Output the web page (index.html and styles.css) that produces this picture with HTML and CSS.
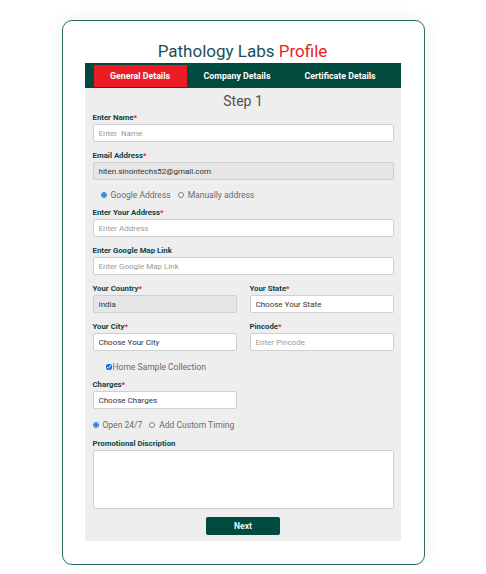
FILE: index.html
```html
<!DOCTYPE html>
<html lang="en">
<head>
<meta charset="utf-8">
<title>Pathology Labs Profile</title>
<link rel="stylesheet" href="styles.css">
</head>
<body>
<div class="card">
  <h1 class="title">Pathology Labs <span class="accent">Profile</span></h1>
  <nav class="tabs">
    <div class="tab active">General Details</div>
    <div class="tab">Company Details</div>
    <div class="tab">Certificate Details</div>
  </nav>
  <form class="panel">
    <h2 class="step">Step 1</h2>
    <div class="group">
      <label class="label">Enter Name<span class="req">*</span></label>
      <input class="field" type="text" placeholder="Enter  Name">
    </div>
    <div class="group">
      <label class="label">Email Address<span class="req">*</span></label>
      <input class="field disabled" type="text" value="hiten.sinontechs52@gmail.com" readonly>
    </div>
    <div class="choices indent">
      <label class="choice"><input type="radio" name="addr" checked> Google Address</label>
      <label class="choice"><input type="radio" name="addr"> Manually address</label>
    </div>
    <div class="group">
      <label class="label">Enter Your Address<span class="req">*</span></label>
      <input class="field" type="text" placeholder="Enter Address">
    </div>
    <div class="group">
      <label class="label">Enter Google Map Link</label>
      <input class="field" type="text" placeholder="Enter Google Map Link">
    </div>
    <div class="row">
      <div class="group">
        <label class="label">Your Country<span class="req">*</span></label>
        <input class="field disabled" type="text" value="India" readonly>
      </div>
      <div class="group">
        <label class="label">Your State<span class="req">*</span></label>
        <input class="field" type="text" value="Choose Your State" readonly>
      </div>
    </div>
    <div class="row">
      <div class="group">
        <label class="label">Your City<span class="req">*</span></label>
        <input class="field" type="text" value="Choose Your City" readonly>
      </div>
      <div class="group">
        <label class="label">Pincode<span class="req">*</span></label>
        <input class="field" type="text" placeholder="Enter Pincode">
      </div>
    </div>
    <div class="check-row">
      <label class="choice tight"><input type="checkbox" checked>Home Sample Collection</label>
    </div>
    <div class="row">
      <div class="group">
        <label class="label">Charges<span class="req">*</span></label>
        <input class="field" type="text" value="Choose Charges" readonly>
      </div>
    </div>
    <div class="choices timing">
      <label class="choice"><input type="radio" name="time" checked> Open 24/7</label>
      <label class="choice"><input type="radio" name="time"> Add Custom Timing</label>
    </div>
    <div class="group">
      <label class="label">Promotional Discription</label>
      <textarea class="field area"></textarea>
    </div>
    <div class="actions">
      <button class="next" type="button">Next</button>
    </div>
  </form>
</div>
</body>
</html>
```
FILE: styles.css
```css
* { box-sizing: border-box; }
html, body { margin: 0; padding: 0; background: #ffffff; }
body {
  font-family: Roboto, "Open Sans", Arial, sans-serif;
  padding-top: 20px;
}
.card {
  width: 363px;
  height: 545px;
  margin: 0 auto;
  border: 1px solid #2d6c60;
  border-radius: 10px;
  padding: 20px 23px 0 22px;
  box-shadow: 0 0 18px rgba(0, 0, 0, 0.07);
  background: #fff;
}
.title {
  margin: 0 0 2px;
  font-size: 17px;
  line-height: 20px;
  font-weight: 400;
  text-align: center;
  color: #1b4f58;
}
.accent { color: #ec1c24; }
.tabs {
  display: grid;
  grid-template-columns: 93px 101px 105px;
  height: 25px;
  padding: 2px 9px 1px;
  background: #004a3e;
}
.tab {
  display: flex;
  align-items: center;
  justify-content: center;
  color: #fff;
  font-size: 8.8px;
  font-weight: 700;
}
.tab.active { background: #ec1c24; }
.panel {
  display: block;
  background: #eeeeee;
  padding: 4px 7px 6px 8px;
}
.step {
  margin: 0 0 3px;
  font-size: 14px;
  line-height: 18px;
  font-weight: 400;
  text-align: center;
  color: #505050;
}
.group { margin-bottom: 9px; }
.row .group { margin-bottom: 0; }
.row { margin-bottom: 9px; }
.label {
  display: block;
  font-size: 7.8px;
  line-height: 10px;
  margin-bottom: 1px;
  font-weight: 700;
  color: #0f4347;
}
.req { color: #e3262d; }
.field {
  display: block;
  width: 100%;
  height: 18px;
  margin: 0;
  padding: 0 5px;
  border: 1px solid #cfcfcf;
  border-radius: 2px;
  background: #fff;
  font-family: inherit;
  font-size: 8px;
  color: #333;
  outline: none;
}
.field::placeholder { color: #9a9a9a; }
.field.disabled { background: #e6e6e6; }
.area { height: 59px; resize: none; }
.choices {
  display: flex;
  gap: 7px;
  height: 12px;
  align-items: center;
  margin: 0 0 7px;
}
.indent { margin-left: 8px; margin-top: 9px; }
.timing { margin-top: 10px; margin-bottom: 8px; }
.choice {
  display: flex;
  align-items: center;
  gap: 4px;
  font-size: 8.5px;
  color: #6b6b6b;
}
.choice.tight { gap: 1px; }
.choice input {
  width: 6px;
  height: 6px;
  margin: 0;
  accent-color: #1a6fe0;
}
.check-row {
  display: flex;
  height: 14px;
  align-items: center;
  margin: 0 0 6px 13px;
}
.row {
  display: grid;
  grid-template-columns: 1fr 1fr;
  column-gap: 13px;
}
.actions {
  display: flex;
  justify-content: center;
  margin-top: -1px;
}
.next {
  width: 74px;
  height: 18px;
  border: 0;
  border-radius: 2px;
  background: #004a3e;
  color: #e8f6f4;
  font-family: inherit;
  font-size: 8.5px;
  font-weight: 700;
  cursor: pointer;
}
```
